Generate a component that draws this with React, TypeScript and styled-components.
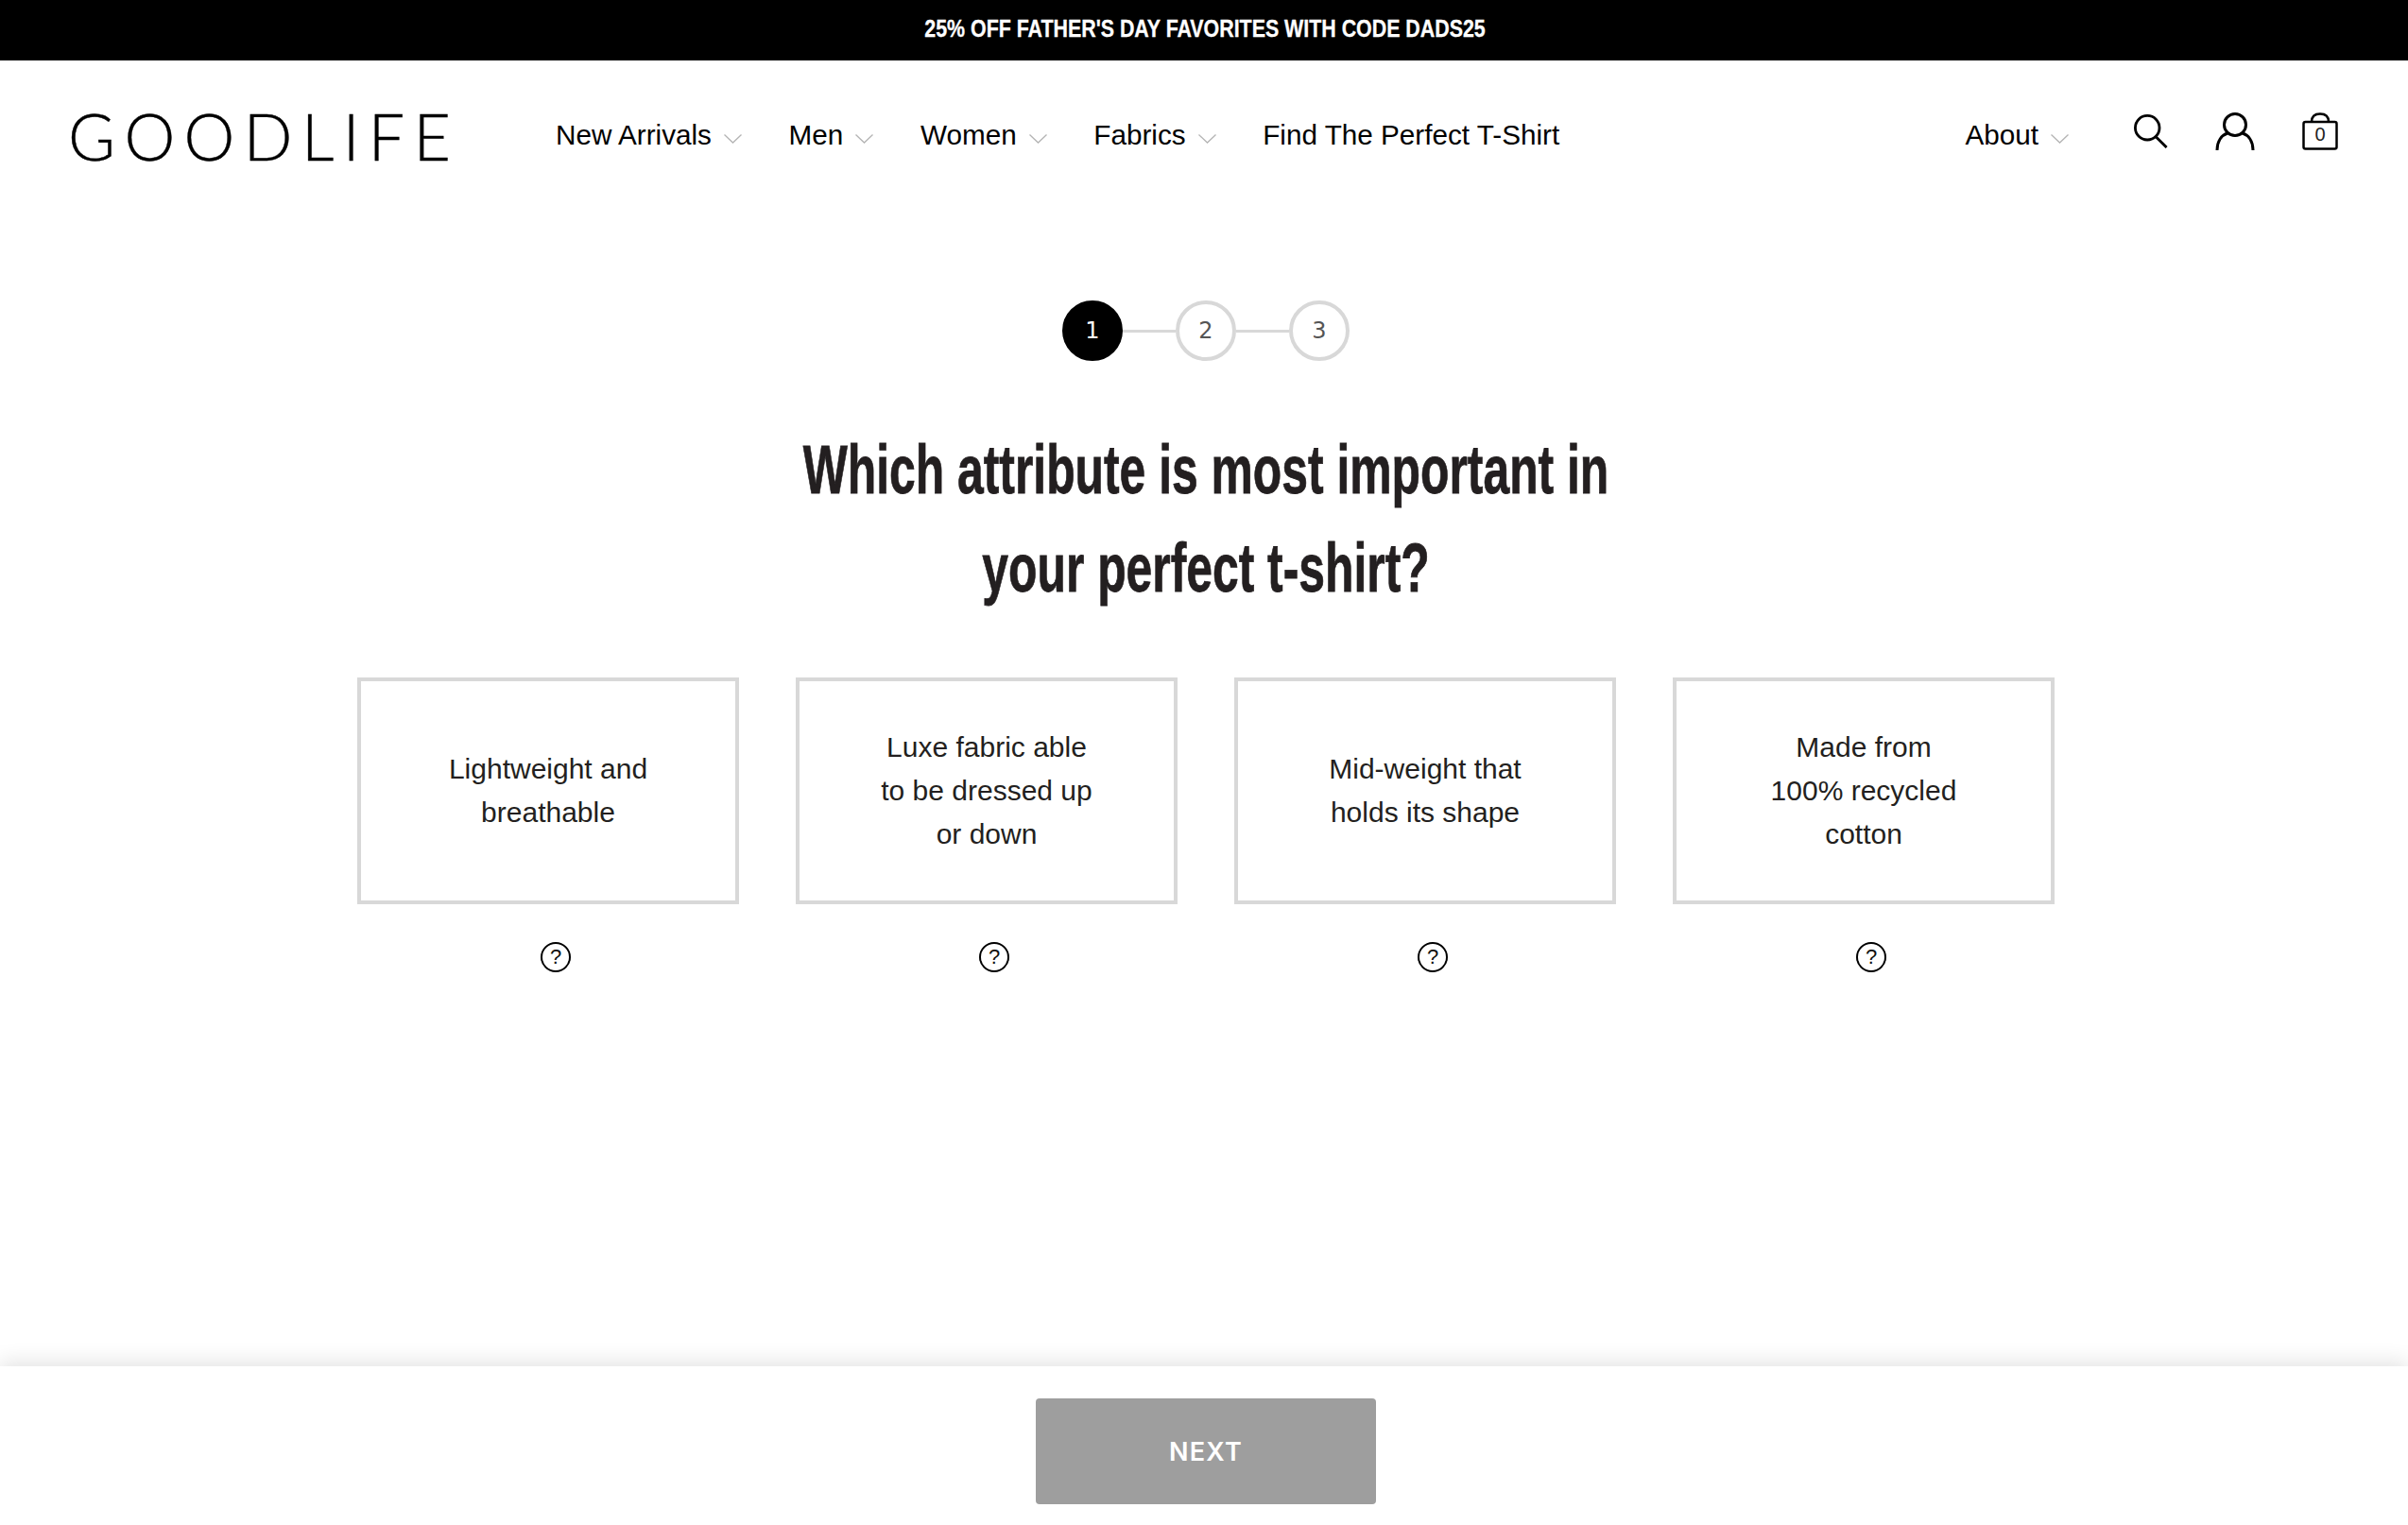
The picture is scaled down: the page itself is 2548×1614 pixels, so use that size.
import React from "react";
import styled, { createGlobalStyle } from "styled-components";

const Global = createGlobalStyle`
  html, body { margin: 0; padding: 0; background: #fff; }
  body { font-family: "Liberation Sans", Arial, sans-serif; color: #000; }
`;

const Page = styled.div`
  min-height: 1614px;
  height: 1614px;
  display: flex;
  flex-direction: column;
  overflow: hidden;
`;

const Banner = styled.div`
  height: 64px;
  box-sizing: border-box;
  padding: 0 0 3px 3px;
  background: #000;
  display: flex;
  align-items: center;
  justify-content: center;
`;

const BannerText = styled.span`
  display: inline-block;
  white-space: nowrap;
  color: #fff;
  font: 700 25px/1 "Liberation Sans", Arial, sans-serif;
  -webkit-text-stroke: 0.3px #fff;
  transform: scaleX(0.855);
  transform-origin: center;
`;

const Header = styled.header`
  height: 158px;
  box-sizing: border-box;
  padding: 0 74px 0 72px;
  display: flex;
  align-items: center;
`;

const Logo = styled.div`
  width: 516px;
  font: 300 68px/1 "Lato", "Open Sans", sans-serif;
  -webkit-text-stroke: 0.4px #000;
  letter-spacing: 9.4px;
  white-space: nowrap;
  color: #000;
  padding-top: 2px;
`;

const Nav = styled.nav`
  display: flex;
  align-items: center;
  gap: 49.6px;
`;

const NavItem = styled.a`
  display: flex;
  align-items: center;
  gap: 13px;
  font-size: 29.7px;
  line-height: 40px;
  color: #000;
  white-space: nowrap;
`;

const Spacer = styled.div`
  flex: 1;
`;

const IconRow = styled.div`
  display: flex;
  align-items: center;
  margin: 0 0 8px 69px;
  gap: 50px;
`;

const BagWrap = styled.div`
  position: relative;
  width: 38px;
  height: 40px;
`;

const BagCount = styled.span`
  position: absolute;
  left: 0;
  right: 0;
  top: 11px;
  text-align: center;
  font-size: 20px;
  line-height: 24px;
  color: #222;
`;

const Main = styled.main`
  flex: 1;
  display: flex;
  flex-direction: column;
  align-items: center;
  padding: 96px 0 0 4px;
`;

const Stepper = styled.div`
  display: flex;
  align-items: center;
`;

const Step = styled.div<{ $active?: boolean }>`
  width: 64px;
  height: 64px;
  box-sizing: border-box;
  border-radius: 50%;
  display: flex;
  align-items: center;
  justify-content: center;
  font: 400 24px/1 "DejaVu Sans", sans-serif;
  color: ${(p) => (p.$active ? "#fff" : "#555")};
  background: ${(p) => (p.$active ? "#000" : "#fff")};
  border: 4px solid ${(p) => (p.$active ? "#000" : "#d8d8d8")};
`;

const StepLine = styled.div`
  width: 56px;
  height: 3px;
  background: #d8d8d8;
`;

const Heading = styled.h1`
  margin: 63px 0 0;
  text-align: center;
  font: 700 72px/104px "Liberation Sans", Arial, sans-serif;
  -webkit-text-stroke: 0.8px #231f20;
  color: #231f20;
  white-space: nowrap;
  transform: scaleX(0.692);
  transform-origin: center;
`;

const Cards = styled.div`
  display: grid;
  grid-template-columns: repeat(4, 404px);
  column-gap: 60px;
  margin-top: 64px;
`;

const CardCol = styled.div`
  display: flex;
  flex-direction: column;
  align-items: center;
`;

const Card = styled.div`
  width: 404px;
  height: 240px;
  box-sizing: border-box;
  border: 4px solid #d8d8d8;
  display: flex;
  align-items: center;
  justify-content: center;
  text-align: center;
  font-size: 30px;
  line-height: 46px;
  color: #231f20;
`;

const Help = styled.div`
  width: 32px;
  height: 32px;
  box-sizing: border-box;
  margin: 40px 0 0 16px;
  border: 2px solid #000;
  border-radius: 50%;
  display: flex;
  align-items: center;
  justify-content: center;
  font-size: 22px;
  line-height: 1;
  color: #111;
`;

const Footer = styled.footer`
  height: 168px;
  box-sizing: border-box;
  padding: 34px 0 0 4px;
  background: #fff;
  display: flex;
  justify-content: center;
  box-shadow: 0 -6px 20px rgba(0, 0, 0, 0.1);
`;

const NextButton = styled.button`
  width: 360px;
  height: 112px;
  border: 0;
  border-radius: 4px;
  background: #9e9e9e;
  color: #fff;
  font: 600 27px/1 "Inter", "Open Sans", sans-serif;
  letter-spacing: 1.2px;
`;

const Chevron = () => (
  <svg width="19" height="10" viewBox="0 0 19 10" fill="none" style={{ marginTop: 8 }}>
    <path d="M0.5 0.5 L9.5 9 L18.5 0.5" stroke="#b4b4b4" strokeWidth="1.3" />
  </svg>
);

const options = [
  ["Lightweight and", "breathable"],
  ["Luxe fabric able", "to be dressed up", "or down"],
  ["Mid-weight that", "holds its shape"],
  ["Made from", "100% recycled", "cotton"],
];

export default function App() {
  return (
    <Page>
      <Global />
      <Banner>
        <BannerText>25% OFF FATHER'S DAY FAVORITES WITH CODE DADS25</BannerText>
      </Banner>
      <Header>
        <Logo>GOODLIFE</Logo>
        <Nav>
          <NavItem>New Arrivals <Chevron /></NavItem>
          <NavItem>Men <Chevron /></NavItem>
          <NavItem>Women <Chevron /></NavItem>
          <NavItem>Fabrics <Chevron /></NavItem>
          <NavItem>Find The Perfect T-Shirt</NavItem>
        </Nav>
        <Spacer />
        <NavItem>About <Chevron /></NavItem>
        <IconRow>
          <svg width="36" height="36" viewBox="0 0 38 38" fill="none" stroke="#000" strokeWidth="3">
            <circle cx="15" cy="15" r="13.5" />
            <path d="M24.5 25 L36.5 37" />
          </svg>
          <svg width="42" height="40" viewBox="0 0 42 40" fill="none" stroke="#000" strokeWidth="3">
            <circle cx="21" cy="13" r="11.5" />
            <path d="M2 40 C2 30 7 24 13 22 M40 40 C40 30 35 24 29 22" />
          </svg>
          <BagWrap>
            <svg width="38" height="40" viewBox="0 0 38 40" fill="none" stroke="#000" strokeWidth="2.5">
              <rect x="1.5" y="10" width="35" height="28.5" rx="2" />
              <path d="M10 10 C10 4 14 1.5 19 1.5 C24 1.5 28 4 28 10" />
            </svg>
            <BagCount>0</BagCount>
          </BagWrap>
        </IconRow>
      </Header>
      <Main>
        <Stepper>
          <Step $active>1</Step>
          <StepLine />
          <Step>2</Step>
          <StepLine />
          <Step>3</Step>
        </Stepper>
        <Heading>
          Which attribute is most important in
          <br />
          your perfect t-shirt?
        </Heading>
        <Cards>
          {options.map((lines) => (
            <CardCol key={lines[0]}>
              <Card>
                <div>
                  {lines.map((l) => (
                    <div key={l}>{l}</div>
                  ))}
                </div>
              </Card>
              <Help>?</Help>
            </CardCol>
          ))}
        </Cards>
      </Main>
      <Footer>
        <NextButton>NEXT</NextButton>
      </Footer>
    </Page>
  );
}
